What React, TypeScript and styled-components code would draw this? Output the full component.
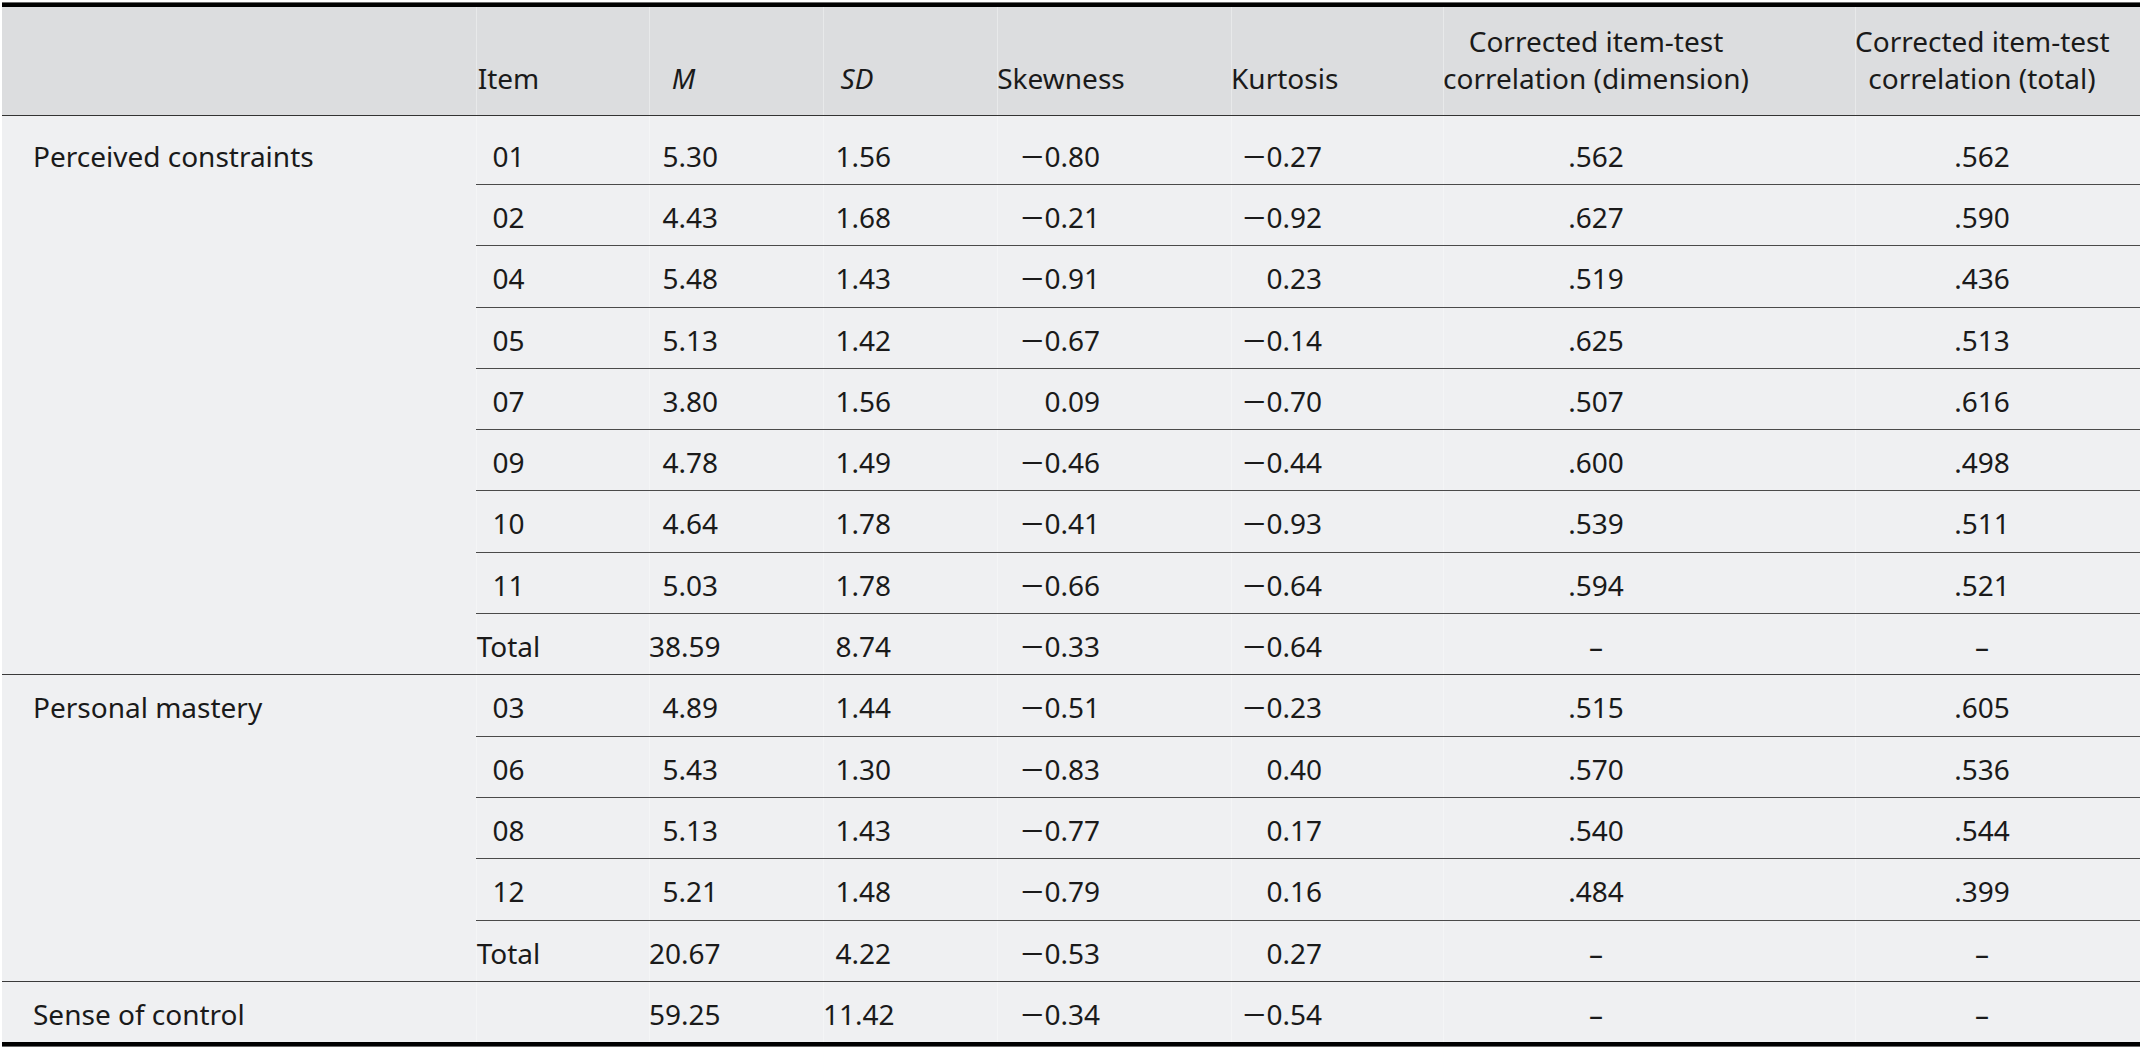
import React from "react";
import styled, { createGlobalStyle, css } from "styled-components";

const GlobalStyle = createGlobalStyle`
  html, body { margin: 0; padding: 0; background: #ffffff; }
  body { font-family: "Noto Sans", "Open Sans", sans-serif; }
`;

type Align = "left" | "center" | "right";
type Rule = "none" | "inner" | "group";

interface Col {
  width: number;
  align: Align;
  bodyPad: number;
  headPad: number;
}

const COLS: Col[] = [
  { width: 474, align: "left", bodyPad: 0, headPad: 0 },
  { width: 173, align: "center", bodyPad: 108, headPad: 108 },
  { width: 174, align: "right", bodyPad: 105, headPad: 105 },
  { width: 174, align: "right", bodyPad: 106, headPad: 106 },
  { width: 234, align: "right", bodyPad: 131, headPad: 106 },
  { width: 212, align: "right", bodyPad: 121, headPad: 105 },
  { width: 412, align: "center", bodyPad: 106, headPad: 106 },
  { width: 285, align: "center", bodyPad: 31, headPad: 31 },
];

interface Group {
  label: string;
  rows: string[][];
}

const GROUPS: Group[] = [
  {
    label: "Perceived constraints",
    rows: [
      ["01", "5.30", "1.56", "-0.80", "-0.27", ".562", ".562"],
      ["02", "4.43", "1.68", "-0.21", "-0.92", ".627", ".590"],
      ["04", "5.48", "1.43", "-0.91", "0.23", ".519", ".436"],
      ["05", "5.13", "1.42", "-0.67", "-0.14", ".625", ".513"],
      ["07", "3.80", "1.56", "0.09", "-0.70", ".507", ".616"],
      ["09", "4.78", "1.49", "-0.46", "-0.44", ".600", ".498"],
      ["10", "4.64", "1.78", "-0.41", "-0.93", ".539", ".511"],
      ["11", "5.03", "1.78", "-0.66", "-0.64", ".594", ".521"],
      ["Total", "38.59", "8.74", "-0.33", "-0.64", "\u2013", "\u2013"],
    ],
  },
  {
    label: "Personal mastery",
    rows: [
      ["03", "4.89", "1.44", "-0.51", "-0.23", ".515", ".605"],
      ["06", "5.43", "1.30", "-0.83", "0.40", ".570", ".536"],
      ["08", "5.13", "1.43", "-0.77", "0.17", ".540", ".544"],
      ["12", "5.21", "1.48", "-0.79", "0.16", ".484", ".399"],
      ["Total", "20.67", "4.22", "-0.53", "0.27", "\u2013", "\u2013"],
    ],
  },
];

const TOTAL_ROW = {
  label: "Sense of control",
  values: ["", "59.25", "11.42", "-0.34", "-0.54", "\u2013", "\u2013"],
};

const Page = styled.div`
  padding: 3px 2px 2px 2px;
`;

const Table = styled.table`
  width: 2138px;
  table-layout: fixed;
  border-collapse: separate;
  border-spacing: 0;
  border-top: 4px solid #000;
  border-bottom: 4px solid #000;
  box-shadow: 0 -1px 0 #6a6a6a, 0 1px 0 #6a6a6a;
  font-family: "Noto Sans", "Open Sans", sans-serif;
  font-size: 28px;
  color: #1a1a1a;
`;

const ruleStyle = (rule: Rule) => {
  if (rule === "inner") return css`border-bottom: 1px solid #4a4a4a;`;
  if (rule === "group") return css`border-bottom: 1px solid #3a3a3a;`;
  return css`border-bottom: 0;`;
};

const HeadCell = styled.th<{ $pad: number; $seam: boolean }>`
  background: #dcdddf;
  font-weight: 400;
  line-height: 37px;
  padding: 16px ${(p) => p.$pad}px 18px 0;
  text-align: center;
  vertical-align: bottom;
  white-space: nowrap;
  border-bottom: 1px solid #333;
  box-shadow: ${(p) => (p.$seam ? "inset 1px 0 0 rgba(255,255,255,0.35)" : "none")};
`;

const Em = styled.span`
  font-style: italic;
`;

const Minus = styled.span`
  display: inline-block;
  width: 23px;
  text-align: left;
  transform: scaleX(1.45);
  transform-origin: left center;
`;

const Cell = styled.td<{ $align: Align; $pad: number; $first: boolean; $rule: Rule }>`
  background: #eff0f2;
  line-height: 37px;
  padding: ${(p) => (p.$first ? "22px" : "14px")} ${(p) => p.$pad}px
    ${(p) => (p.$first ? "9px" : "9.3px")} 0;
  text-align: ${(p) => p.$align};
  vertical-align: top;
  white-space: nowrap;
  box-shadow: inset 1px 0 0 rgba(255, 255, 255, 0.35);
  ${(p) => ruleStyle(p.$rule)}
`;

const GroupLabel = styled.td<{ $first: boolean; $rule: Rule }>`
  background: #eff0f2;
  line-height: 37px;
  padding: ${(p) => (p.$first ? "22px" : "14px")} 0 9.3px 31px;
  text-align: left;
  vertical-align: top;
  white-space: nowrap;
  ${(p) => ruleStyle(p.$rule)}
`;

const HEADERS: React.ReactNode[] = [
  "",
  "Item",
  <Em key="m">M</Em>,
  <Em key="sd">SD</Em>,
  "Skewness",
  "Kurtosis",
  <>
    Corrected item-test
    <br />
    correlation (dimension)
  </>,
  <>
    Corrected item-test
    <br />
    correlation (total)
  </>,
];

function Value({ v }: { v: string }) {
  if (v.startsWith("-")) {
    return (
      <>
        <Minus>{"\u2212"}</Minus>
        {v.slice(1)}
      </>
    );
  }
  return <>{v}</>;
}

export default function App() {
  return (
    <>
      <GlobalStyle />
      <Page>
        <Table>
          <colgroup>
            {COLS.map((c, i) => (
              <col key={i} style={{ width: c.width }} />
            ))}
          </colgroup>
          <thead>
            <tr>
              {HEADERS.map((h, i) => (
                <HeadCell key={i} $pad={COLS[i].headPad} $seam={i > 0}>
                  {h}
                </HeadCell>
              ))}
            </tr>
          </thead>
          <tbody>
            {GROUPS.map((g, gi) =>
              g.rows.map((r, ri) => {
                const first = gi === 0 && ri === 0;
                const rule: Rule = ri === g.rows.length - 1 ? "group" : "inner";
                return (
                  <tr key={`${gi}-${ri}`}>
                    {ri === 0 && (
                      <GroupLabel rowSpan={g.rows.length} $first={gi === 0} $rule="group">
                        {g.label}
                      </GroupLabel>
                    )}
                    {r.map((v, ci) => (
                      <Cell
                        key={ci}
                        $align={COLS[ci + 1].align}
                        $pad={COLS[ci + 1].bodyPad}
                        $first={first}
                        $rule={rule}
                      >
                        <Value v={v} />
                      </Cell>
                    ))}
                  </tr>
                );
              })
            )}
            <tr>
              <GroupLabel $first={false} $rule="none">
                {TOTAL_ROW.label}
              </GroupLabel>
              {TOTAL_ROW.values.map((v, ci) => (
                <Cell
                  key={ci}
                  $align={COLS[ci + 1].align}
                  $pad={COLS[ci + 1].bodyPad}
                  $first={false}
                  $rule="none"
                >
                  <Value v={v} />
                </Cell>
              ))}
            </tr>
          </tbody>
        </Table>
      </Page>
    </>
  );
}
